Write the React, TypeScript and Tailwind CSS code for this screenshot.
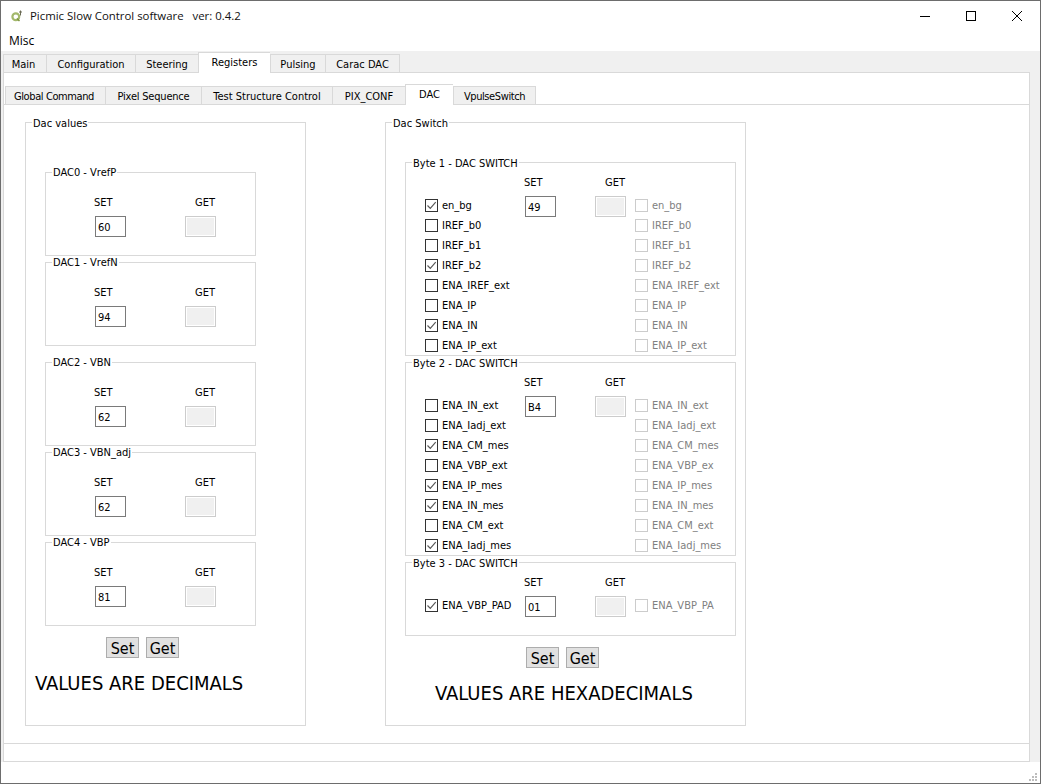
import clsx from 'clsx';
import type { ReactNode } from 'react';

const outerTabs = [
  { label: 'Main', width: 'w-[43px] pr-[3px]' },
  { label: 'Configuration', width: 'w-[89px]' },
  { label: 'Steering', width: 'w-[63px]' },
  { label: 'Registers', width: 'w-[72px]', active: true },
  { label: 'Pulsing', width: 'w-[55px]' },
  { label: 'Carac DAC', width: 'w-[75px] border-r' },
];

const innerTabs = [
  { label: 'Global Command', width: 'w-[100px] pr-[3px] tracking-[-0.4px]' },
  { label: 'Pixel Sequence', width: 'w-[96px] tracking-[-0.2px]' },
  { label: 'Test Structure Control', width: 'w-[131px]' },
  { label: 'PIX_CONF', width: 'w-[73px]' },
  { label: 'DAC', width: 'w-[48px]', active: true },
  { label: 'VpulseSwitch', width: 'w-[83px] border-r tracking-[-0.4px]' },
];

const dacs = [
  { title: 'DAC0 - VrefP', value: '60', gap: 'mb-[6px]' },
  { title: 'DAC1 - VrefN', value: '94', gap: 'mb-[16px]' },
  { title: 'DAC2 - VBN', value: '62', gap: 'mb-[6px]' },
  { title: 'DAC3 - VBN_adj', value: '62', gap: 'mb-[6px]' },
  { title: 'DAC4 - VBP', value: '81', gap: '' },
];

const bytes = [
  {
    title: 'Byte 1 - DAC SWITCH',
    value: '49',
    height: 'h-[194px]',
    gap: 'mb-[6px]',
    rows: [
      ['en_bg', 'en_bg', true],
      ['IREF_b0', 'IREF_b0', false],
      ['IREF_b1', 'IREF_b1', false],
      ['IREF_b2', 'IREF_b2', true],
      ['ENA_IREF_ext', 'ENA_IREF_ext', false],
      ['ENA_IP', 'ENA_IP', false],
      ['ENA_IN', 'ENA_IN', true],
      ['ENA_IP_ext', 'ENA_IP_ext', false],
    ],
  },
  {
    title: 'Byte 2 - DAC SWITCH',
    value: 'B4',
    height: 'h-[194px]',
    gap: 'mb-[6px]',
    rows: [
      ['ENA_IN_ext', 'ENA_IN_ext', false],
      ['ENA_Iadj_ext', 'ENA_Iadj_ext', false],
      ['ENA_CM_mes', 'ENA_CM_mes', true],
      ['ENA_VBP_ext', 'ENA_VBP_ex', false],
      ['ENA_IP_mes', 'ENA_IP_mes', true],
      ['ENA_IN_mes', 'ENA_IN_mes', true],
      ['ENA_CM_ext', 'ENA_CM_ext', false],
      ['ENA_Iadj_mes', 'ENA_Iadj_mes', true],
    ],
  },
  {
    title: 'Byte 3 - DAC SWITCH',
    value: '01',
    height: 'h-[74px]',
    gap: '',
    rows: [['ENA_VBP_PAD', 'ENA_VBP_PA', true]],
  },
] as { title: string; value: string; height: string; gap: string; rows: [string, string, boolean][] }[];

function Tab({ label, width, active }: { label: string; width: string; active?: boolean }) {
  return (
    <div
      className={clsx(
        'flex items-center justify-center border-l border-t border-[#d9d9d9]',
        width,
        active ? 'relative z-10 -mb-px h-[21px] bg-white' : 'h-[18px] bg-[#f0f0f0] pt-[3px]',
      )}
    >
      {label}
    </div>
  );
}

function Group({ title, className, labelTop = '-top-[6px]', children }: { title: string; className: string; labelTop?: string; children: ReactNode }) {
  return (
    <div className={clsx('relative border border-[#d9d9d9]', className)}>
      <span className={clsx('absolute left-[6px] bg-white px-px leading-[14px]', labelTop)}>{title}</span>
      {children}
    </div>
  );
}

function SetInput({ value }: { value: string }) {
  return (
    <div className="flex h-[21px] w-[31px] items-center border border-[#7a7a7a] bg-white pl-[2px] pt-[3px]">{value}</div>
  );
}

function GetInput() {
  return (
    <div className="h-[21px] w-[31px] border border-[#cccccc] bg-white p-px">
      <div className="h-full w-full bg-[#f0f0f0]" />
    </div>
  );
}

function CheckBox({ checked, disabled }: { checked?: boolean; disabled?: boolean }) {
  return (
    <span
      className={clsx(
        'flex h-[13px] w-[13px] shrink-0 items-center justify-center border bg-white',
        disabled ? 'border-[#cccccc]' : 'border-[#333333]',
      )}
    >
      {checked && (
        <svg width="11" height="11" viewBox="0 0 11 11" fill="none" stroke="#5a5a5a" strokeWidth="1.2">
          <path d="M1.5 5.5l2.8 2.8L9.7 2.2" />
        </svg>
      )}
    </span>
  );
}

function CheckRow({ label, checked, disabled }: { label: string; checked?: boolean; disabled?: boolean }) {
  return (
    <div className={clsx('flex h-5 items-center gap-[4px]', disabled && 'text-[#808080]')}>
      <CheckBox checked={checked} disabled={disabled} />
      <span className="whitespace-nowrap pt-[2px]">{label}</span>
    </div>
  );
}

function Buttons({ className }: { className: string }) {
  return (
    <div className={clsx('flex gap-[7px] text-[16px]', className)}>
      <button className="flex h-[21px] w-[33px] items-center justify-center border border-[#adadad] bg-[#e1e1e1] pt-[2px]">Set</button>
      <button className="flex h-[21px] w-[33px] items-center justify-center border border-[#adadad] bg-[#e1e1e1] pt-[2px]">Get</button>
    </div>
  );
}

function QtIcon() {
  return (
    <svg width="12" height="12" viewBox="0 0 12 12" className="shrink-0">
      <circle cx="4.8" cy="6.8" r="3.4" fill="none" stroke="#a3b86c" strokeWidth="2.2" />
      <path d="M6 8.5l2.5 2.5" stroke="#7d9440" strokeWidth="1.5" />
      <path d="M9.5 0.5v5M8 2h3" stroke="#6b6b55" strokeWidth="1" />
    </svg>
  );
}

export default function App() {
  return (
    <div className="flex h-[784px] w-[1041px] flex-col overflow-hidden border border-[#6d6d6d] bg-white text-[11px] text-black [font-family:'DejaVu_Sans_Condensed','DejaVu_Sans',sans-serif]">
      {/* Title bar */}
      <header className="flex h-[30px] shrink-0 items-center text-[11.4px] text-[#111111] [font-family:'Open_Sans',sans-serif]">
        <div className="ml-[10px] mr-[7px]">
          <QtIcon />
        </div>
        <span className="whitespace-pre">Picmic Slow Control software   ver: 0.4.2</span>
        <div className="ml-auto flex text-black">
          <div className="flex h-[30px] w-[46px] items-center justify-center">
            <svg width="10" height="10" viewBox="0 0 10 10" shapeRendering="crispEdges">
              <path d="M0 5h10" stroke="currentColor" />
            </svg>
          </div>
          <div className="flex h-[30px] w-[46px] items-center justify-center">
            <svg width="10" height="10" viewBox="0 0 10 10" shapeRendering="crispEdges">
              <rect x="0.5" y="0.5" width="9" height="9" fill="none" stroke="currentColor" />
            </svg>
          </div>
          <div className="flex h-[30px] w-[46px] items-center justify-center">
            <svg width="10" height="10" viewBox="0 0 10 10">
              <path d="M0 0l10 10M10 0L0 10" stroke="currentColor" />
            </svg>
          </div>
        </div>
      </header>

      {/* Menu bar */}
      <nav className="flex h-5 shrink-0 items-center pl-[8px] text-[12px] [font-family:'Open_Sans',sans-serif]">Misc</nav>

      <main className="flex shrink-0 flex-col bg-[#f0f0f0] pl-[2px] pr-[10px] pt-px">
        <div className="flex h-5 shrink-0 items-end">
          {outerTabs.map((tab) => (
            <Tab key={tab.label} {...tab} />
          ))}
        </div>

        {/* Outer pane */}
        <div className="flex h-[690px] shrink-0 flex-col border border-[#d9d9d9] bg-white">
          <div className="flex h-[31px] shrink-0 items-end pl-px">
            {innerTabs.map((tab) => (
              <Tab key={tab.label} {...tab} />
            ))}
          </div>

          {/* Inner pane */}
          <div className="flex h-[640px] shrink-0 gap-[79px] border-y border-[#d9d9d9] pl-[21px] pt-[17px]">
            <Group title="Dac values" className="h-[604px] w-[281px]">
              <div className="pl-[19px] pt-[49px]">
                {dacs.map((dac) => (
                  <Group key={dac.title} title={dac.title} labelTop="-top-[7px]" className={clsx('h-[84px] w-[211px]', dac.gap)}>
                    <div className="flex pl-[49px] pt-[23px]">
                      <div className="w-[90px]">
                        <div className="-ml-px mb-[6px] h-[14px] leading-[14px]">SET</div>
                        <SetInput value={dac.value} />
                      </div>
                      <div>
                        <div className="mb-[6px] ml-[10px] h-[14px] leading-[14px]">GET</div>
                        <GetInput />
                      </div>
                    </div>
                  </Group>
                ))}
              </div>
              <Buttons className="ml-[80px] mt-[11px]" />
              <div className="ml-[9px] mt-[10px] text-[20px] leading-[30px]">VALUES ARE DECIMALS</div>
            </Group>

            <Group title="Dac Switch" className="h-[604px] w-[361px]">
              <div className="pl-[19px] pt-[39px]">
                {bytes.map((byte) => (
                  <Group key={byte.title} title={byte.title} className={clsx('w-[331px]', byte.height, byte.gap)}>
                    <div className="flex pl-[19px]">
                      <div className="w-[100px] pt-[32px]">
                        {byte.rows.map((row) => (
                          <CheckRow key={row[0]} label={row[0]} checked={row[2]} />
                        ))}
                      </div>
                      <div className="flex w-[110px] pt-[13px]">
                        <div className="w-[70px]">
                          <div className="-ml-px mb-[6px] h-[14px] leading-[14px]">SET</div>
                          <SetInput value={byte.value} />
                        </div>
                        <div>
                          <div className="mb-[6px] ml-[10px] h-[14px] leading-[14px]">GET</div>
                          <GetInput />
                        </div>
                      </div>
                      <div className="pt-[32px]">
                        {byte.rows.map((row) => (
                          <CheckRow key={row[1]} label={row[1]} disabled />
                        ))}
                      </div>
                    </div>
                  </Group>
                ))}
              </div>
              <Buttons className="ml-[140px] mt-[11px]" />
              <div className="ml-[49px] mt-[10px] text-[20px] leading-[30px]">VALUES ARE HEXADECIMALS</div>
            </Group>
          </div>
        </div>
      </main>

      {/* Status bar */}
      <footer className="relative flex-1 bg-white">
        <svg width="8" height="8" viewBox="0 0 8 8" className="absolute bottom-[2px] right-[3px] text-[#bdbdbd]" fill="currentColor">
          <rect x="6" y="0" width="2" height="2" />
          <rect x="3" y="3" width="2" height="2" />
          <rect x="6" y="3" width="2" height="2" />
          <rect x="0" y="6" width="2" height="2" />
          <rect x="3" y="6" width="2" height="2" />
          <rect x="6" y="6" width="2" height="2" />
        </svg>
      </footer>
    </div>
  );
}
